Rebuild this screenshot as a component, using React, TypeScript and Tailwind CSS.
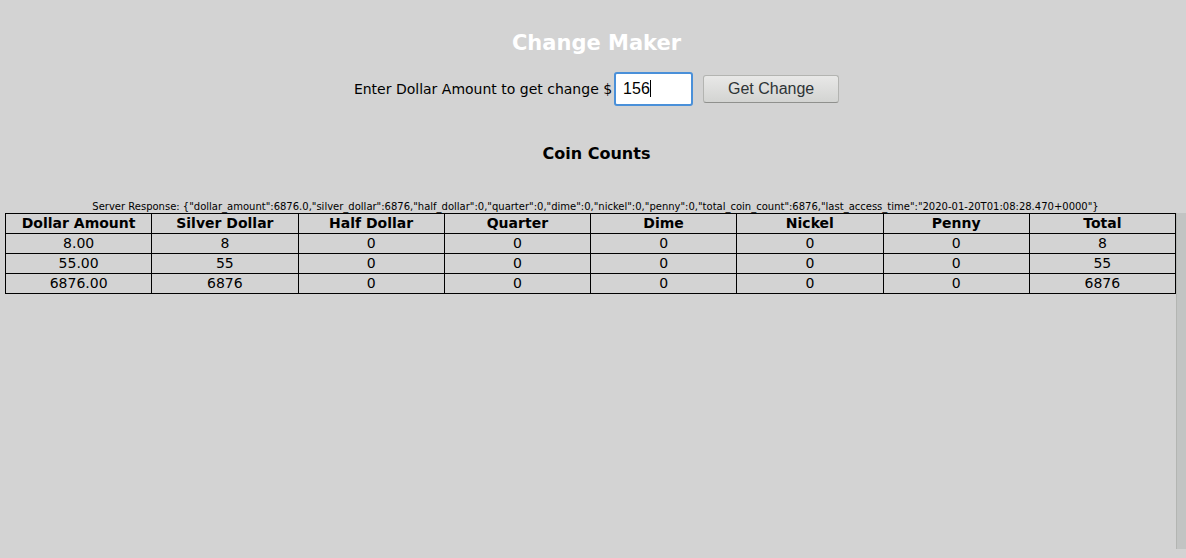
import { useState, type FormEvent } from 'react';

const columns = ['Dollar Amount', 'Silver Dollar', 'Half Dollar', 'Quarter', 'Dime', 'Nickel', 'Penny', 'Total'];

const rows = [
  ['8.00', '8', '0', '0', '0', '0', '0', '8'],
  ['55.00', '55', '0', '0', '0', '0', '0', '55'],
  ['6876.00', '6876', '0', '0', '0', '0', '0', '6876'],
];

const response =
  '{"dollar_amount":6876.0,"silver_dollar":6876,"half_dollar":0,"quarter":0,"dime":0,"nickel":0,"penny":0,"total_coin_count":6876,"last_access_time":"2020-01-20T01:08:28.470+0000"}';

function ChangeForm() {
  const [amount, setAmount] = useState('156');
  const submit = (event: FormEvent) => event.preventDefault();

  return (
    <form onSubmit={submit} className="mt-4 flex items-center justify-center">
      <label htmlFor="amount" className="pr-0.5">
        Enter Dollar Amount to get change $
      </label>
      <div className="relative font-['Liberation_Sans',sans-serif] text-base">
        <input
          id="amount"
          type="text"
          autoFocus
          value={amount}
          onChange={(event) => setAmount(event.target.value)}
          className="block h-[34px] w-[79px] rounded-[3px] border-2 border-[#4a90d9] bg-white px-[7px] text-black caret-transparent outline-none"
        />
        {/* Text cursor, kept at the end of the typed amount */}
        <span
          aria-hidden="true"
          className="pointer-events-none absolute top-2 h-[17px] w-px bg-black"
          style={{ left: 9 + amount.length * 9 }}
        />
      </div>
      <button
        type="submit"
        className="ml-2.5 h-7 w-[136px] rounded-[3px] border border-[#b3b4b1] border-b-[#8f908d] bg-linear-to-b from-[#e8e8e7] to-[#d3d4d2] font-['Liberation_Sans',sans-serif] text-base leading-6 text-[#2e3436]"
      >
        Get Change
      </button>
    </form>
  );
}

export default function App() {
  return (
    <main className="flex min-h-screen flex-col bg-[#d3d3d3] pt-[31px] pb-[9px] font-['DejaVu_Sans',sans-serif] text-sm text-black">
      <div className="pl-[7px] text-center">
        <h1 className="text-[21px] leading-[25px] font-bold text-white">Change Maker</h1>
        <ChangeForm />
        <h2 className="mt-9 text-base leading-6 font-bold">Coin Counts</h2>
      </div>
      <p className="mt-[35px] pl-[5px] text-center text-[10px] leading-3">Server Response: {response}</p>
      <div className="flex grow pl-[5px]">
        <div className="min-w-0 grow">
          <table className="w-full table-fixed border-collapse text-center leading-[19px]">
            <thead>
              <tr>
                {columns.map((column) => (
                  <th key={column} scope="col" className="border border-black font-bold">
                    {column}
                  </th>
                ))}
              </tr>
            </thead>
            <tbody>
              {rows.map((row) => (
                <tr key={row[0]}>
                  {row.map((cell, index) => (
                    <td key={columns[index]} className="border border-black">
                      {cell}
                    </td>
                  ))}
                </tr>
              ))}
            </tbody>
          </table>
        </div>
        <div aria-hidden="true" className="w-2.5 shrink-0 border-l border-[#b3b5b2] bg-[#c2c4c3]" />
      </div>
    </main>
  );
}
